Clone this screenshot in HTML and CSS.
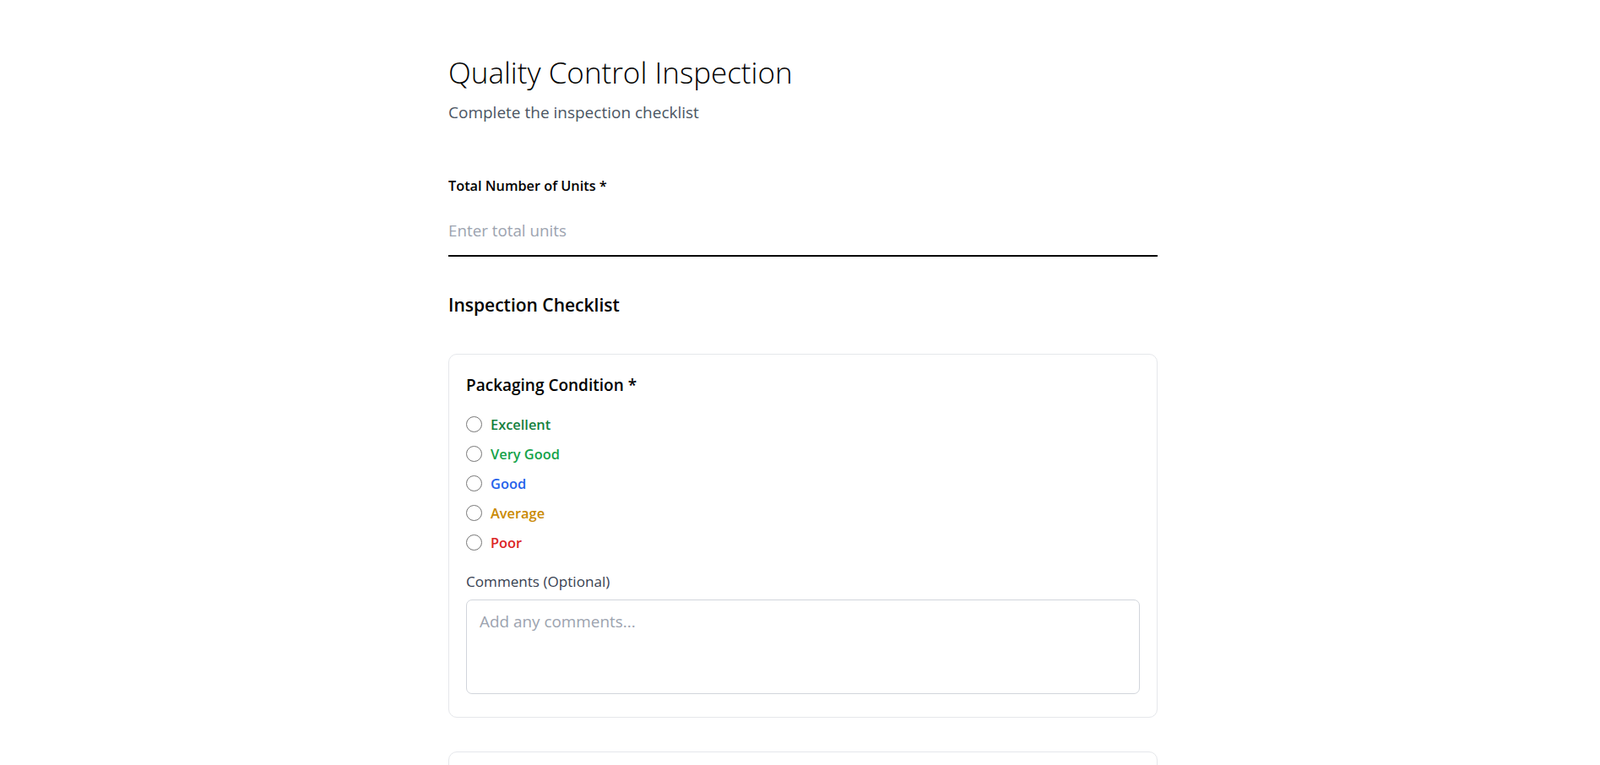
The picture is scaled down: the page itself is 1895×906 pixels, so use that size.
FILE: index.html
```html
<!DOCTYPE html>
<html lang="en">
<head>
<meta charset="utf-8">
<title>Quality Control Inspection</title>
<link rel="stylesheet" href="styles.css">
</head>
<body>
<main class="page">
  <header class="header">
    <h1 class="title">Quality Control Inspection</h1>
    <p class="subtitle">Complete the inspection checklist</p>
  </header>

  <div class="field">
    <label class="field-label" for="units">Total Number of Units *</label>
    <input class="units-input" id="units" type="text" placeholder="Enter total units">
  </div>

  <h2 class="section-title">Inspection Checklist</h2>

  <div class="cards">
    <section class="card">
      <h3 class="card-title">Packaging Condition *</h3>
      <div class="options">
        <label class="option"><input type="radio" name="pack" class="radio"><span class="opt-text c-excellent">Excellent</span></label>
        <label class="option"><input type="radio" name="pack" class="radio"><span class="opt-text c-verygood">Very Good</span></label>
        <label class="option"><input type="radio" name="pack" class="radio"><span class="opt-text c-good">Good</span></label>
        <label class="option"><input type="radio" name="pack" class="radio"><span class="opt-text c-average">Average</span></label>
        <label class="option"><input type="radio" name="pack" class="radio"><span class="opt-text c-poor">Poor</span></label>
      </div>
      <label class="comment-label">Comments (Optional)</label>
      <textarea class="comment" rows="3" placeholder="Add any comments..."></textarea>
    </section>

    <section class="card">
      <h3 class="card-title">Labeling Accuracy *</h3>
      <div class="options">
        <label class="option"><input type="radio" name="label" class="radio"><span class="opt-text c-excellent">Excellent</span></label>
        <label class="option"><input type="radio" name="label" class="radio"><span class="opt-text c-verygood">Very Good</span></label>
        <label class="option"><input type="radio" name="label" class="radio"><span class="opt-text c-good">Good</span></label>
        <label class="option"><input type="radio" name="label" class="radio"><span class="opt-text c-average">Average</span></label>
        <label class="option"><input type="radio" name="label" class="radio"><span class="opt-text c-poor">Poor</span></label>
      </div>
      <label class="comment-label">Comments (Optional)</label>
      <textarea class="comment" rows="3" placeholder="Add any comments..."></textarea>
    </section>
  </div>
</main>
</body>
</html>
```

FILE: styles.css
```css
html {
  scrollbar-width: none;
}
* {
  box-sizing: border-box;
}
body {
  margin: 0;
  background: #ffffff;
  font-family: "Open Sans", "Noto Sans", "Liberation Sans", sans-serif;
  color: #000000;
}
.page {
  width: 847px;
  margin: 0 auto;
  padding: 61px 0 40px 7px;
}
.header {
  margin-bottom: 60px;
}
.title {
  margin: 0;
  font-size: 35px;
  line-height: 50px;
  font-weight: 300;
  color: #000000;
}
.subtitle {
  margin: 7px 0 0;
  font-size: 19px;
  line-height: 30px;
  color: #4b5563;
}
.field {
  display: flex;
  flex-direction: column;
}
.field-label {
  font-size: 16.3px;
  line-height: 25px;
  font-weight: 600;
  margin-bottom: 15px;
}
.units-input {
  display: block;
  width: 100%;
  border: 0;
  border-bottom: 2px solid #000000;
  padding: 10px 0 14px;
  font-family: inherit;
  font-size: 18.8px;
  line-height: 30px;
  color: #111827;
  outline: none;
  background: transparent;
}
.units-input::placeholder,
.comment::placeholder {
  color: #9ca3af;
}
.section-title {
  margin: 40px 0 40px;
  font-size: 21px;
  line-height: 35px;
  font-weight: 600;
}
.cards {
  display: flex;
  flex-direction: column;
  gap: 40px;
}
.card {
  border: 1px solid #e5e7eb;
  border-radius: 10px;
  padding: 20px 20px 27px;
}
.card-title {
  margin: 0 0 18px;
  font-size: 19px;
  line-height: 32px;
  font-weight: 600;
}
.options {
  display: flex;
  flex-direction: column;
  gap: 10px;
}
.option {
  display: flex;
  align-items: center;
  height: 25px;
}
.radio {
  appearance: none;
  -webkit-appearance: none;
  width: 19px;
  height: 19px;
  margin: 0 10px 0 0;
  border: 1.5px solid #767676;
  border-radius: 50%;
  background: #ffffff;
  flex: none;
}
.opt-text {
  font-size: 16.4px;
  line-height: 25px;
  font-weight: 600;
}
.c-excellent { color: #15803d; }
.c-verygood { color: #16a34a; }
.c-good { color: #2563eb; }
.c-average { color: #ca8a04; }
.c-poor { color: #dc2626; }
.comment-label {
  display: block;
  margin: 21px 0 9px;
  font-size: 17.1px;
  line-height: 25px;
  font-weight: 500;
  color: #374151;
}
.comment {
  display: block;
  width: 100%;
  height: 112px;
  resize: none;
  border: 1px solid #d1d5db;
  border-radius: 7px;
  padding: 10px 15px;
  font-family: inherit;
  font-size: 18.9px;
  line-height: 30px;
  color: #111827;
  outline: none;
}
```
